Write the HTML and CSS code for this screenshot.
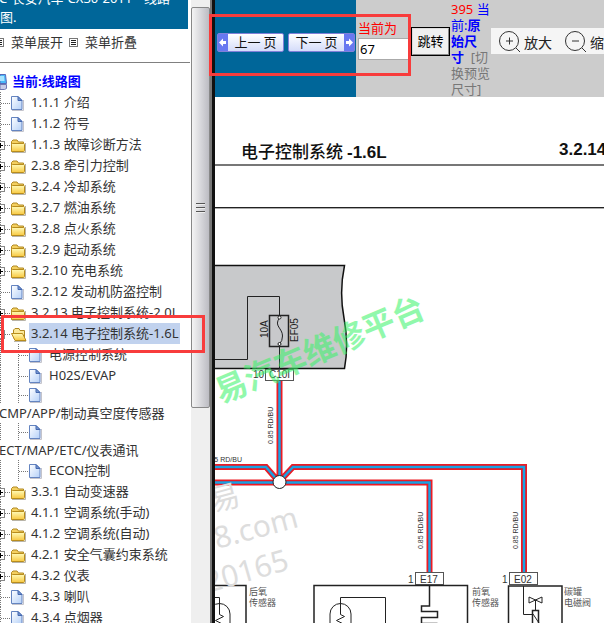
FILE: index.html
```html
<!DOCTYPE html>
<html lang="zh-CN">
<head>
<meta charset="utf-8">
<title>线路图</title>
<link rel="stylesheet" href="styles.css">
</head>
<body>
<svg class="defs" aria-hidden="true">
  <defs>
    <linearGradient id="gold" x1="0" y1="0" x2="0" y2="1"><stop offset="0" stop-color="#fffbb8"/><stop offset="1" stop-color="#f8c840"/></linearGradient>
    <linearGradient id="sheet" x1="0" y1="0" x2="1" y2="1"><stop offset="0" stop-color="#ffffff"/><stop offset="1" stop-color="#b4d0f8"/></linearGradient>
    <symbol id="page-icon" viewBox="0 0 14 16"><path d="M2 15.500h11.500V5" fill="none" stroke="#c4c4cc"/><path d="M1.500 1.500h6.500l4 4v9h-10.500z" fill="url(#sheet)" stroke="#6484c0"/><path d="M8 1.500v4h4z" fill="#7898d0" stroke="#4468b0"/></symbol>
    <symbol id="folder-icon" viewBox="0 0 16 16"><path d="M2 15.500h13.500V6" fill="none" stroke="#b8b4a8"/><path d="M1.500 14.500v-10l1.500-1.500h4l1.500 2h5v9z" fill="#f4d060" stroke="#b08820"/><rect x="1.500" y="6.500" width="13" height="8" rx="1" fill="url(#gold)" stroke="#b88c1c"/></symbol>
    <symbol id="open-icon" viewBox="0 0 16 16"><path d="M3 15.500h12" fill="none" stroke="#b8b4a8"/><path d="M2.500 12v-8l1.500-1.500h4l1 2h4.500v8z" fill="#fbe898" stroke="#b08820"/><path d="M.5 7.500h11l3.500 7h-11z" fill="url(#gold)" stroke="#b88c1c"/></symbol>
    <symbol id="leaf" viewBox="0 0 31 21"><path d="M.5 0v21M1 11.500h9" class="dots"/><use href="#page-icon" x="10" y="3" width="14" height="16"/></symbol>
    <symbol id="branch" viewBox="0 0 31 21"><path d="M.5 0v21M5 11.500h6" class="dots"/><rect x="-4.500" y="7.500" width="9" height="8" fill="#fff" stroke="#888"/><path d="M0 11.500h3M.5 9v5" stroke="#000"/><use href="#folder-icon" x="10" y="3" width="16" height="16"/></symbol>
    <symbol id="branch-open" viewBox="0 0 31 21"><path d="M.5 0v21M5 11.500h6" class="dots"/><rect x="-4.500" y="7.500" width="9" height="8" fill="#fff" stroke="#888"/><path d="M0 11.500h3" stroke="#000"/><use href="#open-icon" x="11" y="3" width="16" height="16"/></symbol>
    <symbol id="child" viewBox="0 0 49 21"><path d="M.5 0v21M18.500 0v21M19 11.500h10" class="dots"/><use href="#page-icon" x="28" y="3" width="14" height="16"/></symbol>
    <symbol id="menu-icon" viewBox="0 0 9 9"><rect x=".5" y=".5" width="8" height="8" fill="#fff" stroke="#777"/><path d="M2 2.500h5M2 4.500h5M2 6.500h5" stroke="#222"/></symbol>
  </defs>
</svg>

<aside class="sidebar">
  <nav class="menu">
    <h1 class="banner">C-长安汽车-CX30-2011-- 线路图.</h1>
    <div class="tools">
      <a href="#open"><svg class="ico"><use href="#menu-icon"/></svg>菜单展开</a>
      <a href="#close"><svg class="ico"><use href="#menu-icon"/></svg>菜单折叠</a>
    </div>
    <a class="row root" href="#root"><svg class="pc" viewBox="0 0 12 18"><path d="M0 1.500h5.500l1 9H0z" fill="#48b8f8" stroke="#5868b8"/><path d="M0 3h4l.5 5H0z" fill="#a8e4ff"/><path d="M0 11.500h6.500v4l-2 1H0z" fill="#c8cce8" stroke="#7078b0"/></svg>当前:线路图</a>
    <a class="row" href="#n1"><svg class="twig"><use href="#leaf"/></svg><span>1.1.1 介绍</span></a>
    <a class="row" href="#n2"><svg class="twig"><use href="#leaf"/></svg><span>1.1.2 符号</span></a>
    <a class="row" href="#n3"><svg class="twig"><use href="#branch"/></svg><span>1.1.3 故障诊断方法</span></a>
    <a class="row" href="#n4"><svg class="twig"><use href="#branch"/></svg><span>2.3.8 牵引力控制</span></a>
    <a class="row" href="#n5"><svg class="twig"><use href="#branch"/></svg><span>3.2.4 冷却系统</span></a>
    <a class="row" href="#n6"><svg class="twig"><use href="#branch"/></svg><span>3.2.7 燃油系统</span></a>
    <a class="row" href="#n7"><svg class="twig"><use href="#branch"/></svg><span>3.2.8 点火系统</span></a>
    <a class="row" href="#n8"><svg class="twig"><use href="#branch"/></svg><span>3.2.9 起动系统</span></a>
    <a class="row" href="#n9"><svg class="twig"><use href="#branch"/></svg><span>3.2.10 充电系统</span></a>
    <a class="row" href="#n10"><svg class="twig"><use href="#leaf"/></svg><span>3.2.12 发动机防盗控制</span></a>
    <a class="row" href="#n11"><svg class="twig"><use href="#branch"/></svg><span>3.2.13 电子控制系统-2.0L</span></a>
    <a class="row current" href="#n12"><svg class="twig"><use href="#branch-open"/></svg><span>3.2.14 电子控制系统-1.6L</span></a>
    <a class="row" href="#n13"><svg class="twig deep"><use href="#child"/></svg><span>电源控制系统</span></a>
    <a class="row" href="#n14"><svg class="twig deep"><use href="#child"/></svg><span>H02S/EVAP</span></a>
    <a class="wrapped" href="#n15"><svg class="twig deep"><use href="#child" y="-2" width="49" height="21"/></svg><span>CMP/APP/制动真空度传感器</span></a>
    <a class="wrapped" href="#n16"><svg class="twig deep"><use href="#child" y="-2" width="49" height="21"/></svg><span>ECT/MAP/ETC/仪表通讯</span></a>
    <a class="row" href="#n17"><svg class="twig deep"><use href="#child"/></svg><span>ECON控制</span></a>
    <a class="row" href="#n18"><svg class="twig"><use href="#branch"/></svg><span>3.3.1 自动变速器</span></a>
    <a class="row" href="#n19"><svg class="twig"><use href="#branch"/></svg><span>4.1.1 空调系统(手动)</span></a>
    <a class="row" href="#n20"><svg class="twig"><use href="#branch"/></svg><span>4.1.2 空调系统(自动)</span></a>
    <a class="row" href="#n21"><svg class="twig"><use href="#branch"/></svg><span>4.2.1 安全气囊约束系统</span></a>
    <a class="row" href="#n22"><svg class="twig"><use href="#branch"/></svg><span>4.3.2 仪表</span></a>
    <a class="row" href="#n23"><svg class="twig"><use href="#leaf"/></svg><span>4.3.3 喇叭</span></a>
    <a class="row" href="#n24"><svg class="twig"><use href="#leaf"/></svg><span>4.3.4 点烟器</span></a>
  </nav>
  <div class="track"><div class="thumb"><i class="grip"></i></div></div>
</aside>

<main class="viewer">
  <header class="bar">
    <div class="pager">
      <button class="turn" type="button"><svg class="arrow" viewBox="0 0 10 16"><path d="M1 8l4-4v2.500h3v3H5V12z" fill="#fff"/></svg><span>上一 页</span></button>
      <button class="turn next" type="button"><span>下一 页</span><svg class="arrow" viewBox="0 0 10 16"><path d="M9 8L5 4v2.500H2v3h3V12z" fill="#fff"/></svg></button>
    </div>
    <div class="number"><label for="page">当前为</label><input id="page" type="text" value="67"></div>
    <button class="jump" type="button">跳转</button>
    <div class="size"><em>395</em> <span>当前:<b>原始尺寸</b></span>&nbsp; <a href="#size">[切换预览尺寸]</a></div>
    <div class="zoom">
      <button type="button"><svg viewBox="0 0 24 24"><circle cx="11" cy="11" r="9.500"/><path d="M18 18l4 4M8 11h7M11.500 7.500v7"/></svg>放大</button>
      <button type="button"><svg viewBox="0 0 24 24"><circle cx="11" cy="11" r="9.500"/><path d="M18 18l4 4M8 11h7"/></svg>缩小</button>
    </div>
  </header>
  <svg class="sheet" viewBox="215 97 389 526" preserveAspectRatio="xMinYMin slice">
    <g class="title"><text x="241" y="158" class="cn">电子控制系统</text><text x="347" y="158">-1.6L</text><text x="559" y="155">3.2.14</text></g>
    <path d="M215 165h389" stroke="#777" stroke-width="2"/>
    <path d="M215 207.500h389" stroke="#222"/><path d="M215 208.500h389" stroke="#aaa"/>
    <path d="M213 265.500H344.500Q339 292 344 318T344.500 368.500H213" fill="#c8c9cb" stroke="#111" stroke-width="1.500"/>
    <path d="M215 359.500h32.500v-63h32v20M279.500 345v24" class="line"/>
    <rect x="269.500" y="315.500" width="19" height="31" class="line mid"/>
    <path d="M279.500 318c-6 8 3 10 3 18q0 5-3 8" class="line"/>
    <circle cx="279.500" cy="317.500" r="1.500" class="dot"/><circle cx="279.500" cy="344" r="1.500" class="dot"/>
    <text class="small" transform="translate(268 338) rotate(-90)">10A</text>
    <text class="small" transform="translate(298 342) rotate(-90)">EF05</text>
    <text x="253" y="378" class="pin">10</text><rect x="265.500" y="369.500" width="28" height="11" class="tag"/><text x="269" y="378" class="pin">C10I</text>
    <g class="red"><path d="M279.500 381v101M215 467h51l13 15 14-15h231v105"/><path d="M215 482.500h214.500V572"/></g>
    <g class="edge"><path d="M279.500 381v101M215 467h51l13 15 14-15h231v105"/><path d="M215 482.500h214.500V572"/></g>
    <g class="blue"><path d="M279.500 381v101M215 467h51l13 15 14-15h231v105"/><path d="M215 482.500h214.500V572"/></g>
    <circle cx="279.500" cy="482" r="6.500" fill="#fff" stroke="#222"/>
    <g class="wire">
      <text transform="translate(273 444) rotate(-90)">0.85 RD/BU</text>
      <text transform="translate(423 549) rotate(-90)">0.85 RD/BU</text>
      <text transform="translate(518 549) rotate(-90)">0.85 RD/BU</text>
      <text x="242" y="462" text-anchor="end">0.85 RD/BU</text>
    </g>
    <text x="408" y="583" class="pin">1</text><rect x="415.500" y="572.500" width="28" height="12" class="tag"/><text x="420" y="583" class="pin">E17</text>
    <text x="502" y="583" class="pin">1</text><rect x="509.500" y="572.500" width="28" height="12" class="tag"/><text x="514" y="583" class="pin">E02</text>
    <path d="M213 585.500h33V640M314 640v-54.500h153.500V640M508.500 640v-54h53.500V640" class="line mid"/>
    <path d="M215 597.500h4.500v17l4 2-8 4 8 4-4 2M209 640v-26a10.500 10.500 0 0 1 21 0v26" class="line"/>
    <path d="M385.500 640v-42.500h-45v17l4 2-8 4 8 4-4 2M330 640v-26a10.500 10.500 0 0 1 21 0v26" class="line"/>
    <path d="M429.500 586v20h-8v5.500h16v6h-16v6h16" class="line mid"/>
    <path d="M523.500 586v28.500h9M535.500 600v10M529 597v6l13-6v6z" class="line"/><rect x="532.500" y="610.500" width="6" height="16" class="line mid"/><path d="M533 614l6 9" class="line"/>
    <g class="name"><text x="249" y="595">后氧</text><text x="249" y="606">传感器</text><text x="472" y="595">前氧</text><text x="472" y="606">传感器</text><text x="564" y="595">碳罐</text><text x="564" y="606">电磁阀</text></g>
    <text class="mark" transform="translate(221 404) rotate(-23)">易汽车维修平台</text>
    <g class="ghost"><text transform="translate(213 512) rotate(-15)">易</text><text transform="translate(217 549) rotate(-15)">8.com</text><text transform="translate(208 593) rotate(-16)">20165</text></g>
  </svg>
</main>
<div class="callout paging"></div>
<div class="callout entry"></div>
</body>
</html>
```
FILE: styles.css
```css
* { box-sizing: border-box; }
body {
  margin: 0;
  height: 100vh;
  display: flex;
  overflow: hidden;
  position: relative;
  background: #fff;
  color: #333;
  font: 13px/21px "Noto Sans", "Noto Sans CJK SC", sans-serif;
}
a { color: inherit; text-decoration: none; }
button { font: inherit; margin: 0; }
.defs { position: absolute; width: 0; height: 0; }
.dots { fill: none; stroke: #777; stroke-dasharray: 1 1; }

.sidebar {
  flex: 0 0 215px;
  display: flex;
  overflow: hidden;
  border-right: 3px solid #111;
  box-shadow: inset -2px 0 #777;
}
.menu { flex: 1; min-width: 0; overflow: hidden; white-space: nowrap; }
.banner {
  margin: -11px 3px 0 0;
  padding-bottom: 2px;
  background: #069;
  color: #fff;
  font-size: 13px;
  font-weight: normal;
  line-height: 19px;
  text-indent: -1px;
  padding-right: 4px;
  white-space: normal;
}
.tools {
  display: flex;
  gap: 6px;
  height: 34px;
  margin: 0 1px 8px -5px;
  padding-top: 3px;
  border-bottom: 1px solid #808080;
}
.tools a { display: flex; align-items: center; gap: 7px; height: 21px; }
.ico { width: 9px; height: 9px; }
.row { display: flex; height: 21px; }
.twig { flex: none; width: 31px; height: 21px; }
.twig.deep { width: 49px; }
.root { color: #00f; font-weight: bold; }
.pc { width: 12px; height: 18px; margin-top: 2px; }
.current span { background: #c1d2ee; margin-left: -2px; padding: 0 2px; }
.wrapped { display: block; height: 37px; }
.wrapped .twig { display: block; height: 18px; }
.wrapped span { display: block; line-height: 19px; margin-left: -1px; }
.track { flex: 0 0 19px; margin-right: 2px; padding-top: 7px; background: #efefef; }
.thumb {
  height: 401px;
  border: 1px solid #888;
  border-radius: 2px;
  background: linear-gradient(90deg, #f4f4f4, #d8d8dc 50%, #bcbcc2);
  display: flex;
  align-items: center;
  justify-content: center;
}
.grip { width: 9px; height: 10px; background: repeating-linear-gradient(#555 0 1px, #eee 1px 2px, transparent 2px 4px); }

.viewer { flex: 1; min-width: 0; display: flex; flex-direction: column; }
.bar { flex: 0 0 97px; display: flex; align-items: center; background: #ccc; overflow: hidden; }
.pager { flex: 0 0 141px; align-self: stretch; display: flex; align-items: center; gap: 4px; padding: 0 0 13px 2px; background: #069; }
.turn {
  display: flex;
  width: 67px;
  height: 19px;
  padding: 0;
  border: 1px solid #8080d8;
  border-radius: 2px;
  background: linear-gradient(#fff, #d4dcfa);
  color: #111;
  font: 13px/16px "Noto Sans CJK SC", sans-serif;
}
.turn span { flex: 1; text-align: center; }
.arrow { width: 10px; height: 17px; background: #6878f0; }
.number { flex: 0 0 55px; padding: 0 0 18px 2px; }
.number label { display: block; color: #f00; line-height: 19px; }
.number input { display: block; width: 53px; height: 22px; padding: 0 1px; border: 1px solid #aaa; background: #fff; color: #000; font: 13px "Noto Sans", sans-serif; }
.jump { flex: 0 0 39px; height: 29px; margin-bottom: 15px; padding: 0; border: 2px outset #ddd; outline: 1px solid #000; outline-offset: -1px; background: #f0f0f0; color: #000; }
.size { flex: 0 0 41px; align-self: flex-start; padding-left: 1px; padding-top: 1px; line-height: 16px; color: #00f; }
.size em { color: #f00; font-style: normal; }
.size a { color: #777; }
.zoom { flex: 1; display: flex; gap: 12px; height: 26px; margin-bottom: 15px; padding-left: 7px; background: #f5f5f5; overflow: hidden; }
.zoom button { flex: none; display: flex; align-items: center; gap: 2px; padding: 2px 0 0; border: 0; background: none; color: #222; font-size: 14px; }
.zoom svg { width: 24px; height: 24px; fill: none; stroke: #333; }

.sheet { flex: 1; min-height: 0; width: 100%; font-family: "Liberation Sans", "Noto Sans CJK SC", sans-serif; }
.title { font-size: 17px; font-weight: bold; fill: #111; }
.title .cn { font-weight: 500; }
.line { fill: none; stroke: #222; stroke-width: 1; }
.mid { stroke-width: 1.5; }
.dot { fill: #fff; stroke: #222; }
.small { font-size: 10px; fill: #222; }
.pin { font-size: 10px; fill: #333; }
.tag { fill: #fff; stroke: #555; }
.wire { font-size: 7px; fill: #333; }
.red, .edge, .blue { fill: none; }
.red { stroke: #ec1c24; stroke-width: 6; }
.edge { stroke: #805080; stroke-width: 3; }
.blue { stroke: #18a4e4; stroke-width: 2; }
.name { font-size: 9px; fill: #555; }
.mark { font-size: 32px; font-weight: bold; fill: #38f468; opacity: .55; }
.ghost { font: 30px "Noto Sans", "Noto Sans CJK SC", sans-serif; fill: #ddd; }

.callout { position: absolute; border: 3px solid #f83c3c; pointer-events: none; }
.paging { left: 209px; top: 14px; width: 202px; height: 62px; }
.entry { left: 1px; top: 315px; width: 204px; height: 38px; }
```
